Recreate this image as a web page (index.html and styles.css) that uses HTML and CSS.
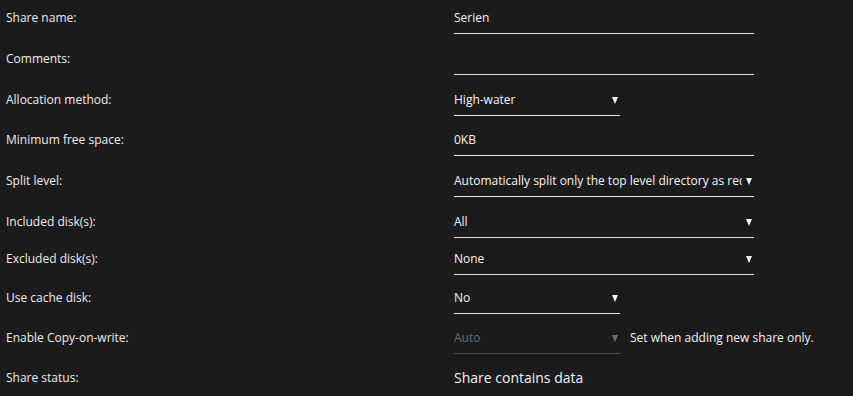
FILE: index.html
```html
<!DOCTYPE html>
<html lang="en">
<head>
    <meta charset="UTF-8">
    <title>Share Settings</title>
    <link rel="stylesheet" href="styles.css">
</head>
<body>
    <div class="share-form">
        <div class="row tall">
            <div class="label">Share name:</div>
            <div class="field wide">Serien</div>
        </div>
        <div class="row tall">
            <div class="label">Comments:</div>
            <div class="field wide"></div>
        </div>
        <div class="row">
            <div class="label">Allocation method:</div>
            <div class="field narrow select">High-water<span class="arrow"></span></div>
        </div>
        <div class="row tall">
            <div class="label">Minimum free space:</div>
            <div class="field wide">0KB</div>
        </div>
        <div class="row tall">
            <div class="label">Split level:</div>
            <div class="field wide select"><span class="clip">Automatically split only the top level directory as required</span><span class="arrow"></span></div>
        </div>
        <div class="row short">
            <div class="label">Included disk(s):</div>
            <div class="field wide select">All<span class="arrow"></span></div>
        </div>
        <div class="row mid">
            <div class="label">Excluded disk(s):</div>
            <div class="field wide select">None<span class="arrow"></span></div>
        </div>
        <div class="row">
            <div class="label">Use cache disk:</div>
            <div class="field narrow select">No<span class="arrow"></span></div>
        </div>
        <div class="row">
            <div class="label">Enable Copy-on-write:</div>
            <div class="field narrow select disabled">Auto<span class="arrow"></span></div>
            <div class="note">Set when adding new share only.</div>
        </div>
        <div class="row">
            <div class="label">Share status:</div>
            <div class="status">Share contains data</div>
        </div>
    </div>
</body>
</html>
```

FILE: styles.css
```css
* {
    box-sizing: border-box;
    margin: 0;
    padding: 0;
}

body {
    background-color: #1c1b1b;
    color: #f2f2f2;
    font-family: "Open Sans", Arial, sans-serif;
    font-size: 12px;
    padding: 0 6px;
}

.row {
    display: flex;
    align-items: flex-start;
    height: 40px;
    padding-top: 9px;
}

.row.tall {
    height: 41px;
}

.row.mid {
    height: 39px;
}

.row.short {
    height: 37px;
}

.label {
    width: 448px;
    color: #ececec;
    line-height: 17px;
}

.field {
    position: relative;
    height: 25px;
    line-height: 17px;
    border-bottom: 1px solid #e6e6e6;
    color: #f4f4f4;
    white-space: nowrap;
}

.wide {
    width: 300px;
}

.narrow {
    width: 166px;
}

.select {
    padding-right: 12px;
}

.clip {
    display: block;
    overflow: hidden;
}

.arrow {
    position: absolute;
    right: 2px;
    top: 6px;
    width: 0;
    height: 0;
    border-left: 3.5px solid transparent;
    border-right: 3.5px solid transparent;
    border-top: 7px solid #f2f2f2;
}

.disabled {
    color: #6e6e6e;
    border-bottom-color: #4a4a4a;
}

.disabled .arrow {
    border-top-color: #6e6e6e;
}

.note {
    margin-left: 10px;
    line-height: 17px;
}

.status {
    font-size: 14px;
    line-height: 17px;
}
```
